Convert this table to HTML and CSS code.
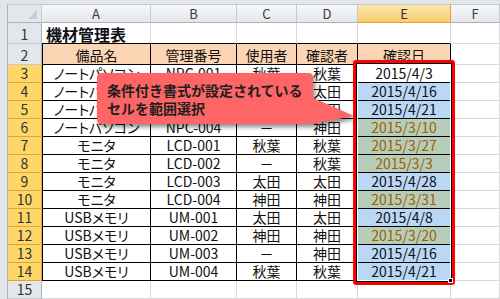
FILE: index.html
```html
<!DOCTYPE html>
<html lang="ja">
<head>
<meta charset="utf-8">
<link rel="stylesheet" href="styles.css">
</head>
<body>
<div class="frame">
  <div class="sheet">
    <div class="h corner"></div><div class="h">A</div><div class="h">B</div><div class="h">C</div><div class="h">D</div><div class="h hs">E</div><div class="h">F</div>

    <div class="rh">1</div><div class="c title top">機材管理表</div><div class="c top"></div><div class="c top"></div><div class="c top"></div><div class="c top"></div><div class="c"></div>

    <div class="rh">2</div><div class="c t l hd">備品名</div><div class="c t hd">管理番号</div><div class="c t hd">使用者</div><div class="c t hd">確認者</div><div class="c t hd">確認日</div><div class="c"></div>

    <div class="rh rs">3</div><div class="c t l">ノートパソコン</div><div class="c t">NPC-001</div><div class="c t">秋葉</div><div class="c t">秋葉</div><div class="c t e act">2015/4/3</div><div class="c"></div>
    <div class="rh rs">4</div><div class="c t l">ノートパソコン</div><div class="c t">NPC-002</div><div class="c t">太田</div><div class="c t">太田</div><div class="c t e blue">2015/4/16</div><div class="c"></div>
    <div class="rh rs">5</div><div class="c t l">ノートパソコン</div><div class="c t">NPC-003</div><div class="c t">神田</div><div class="c t">太田</div><div class="c t e blue">2015/4/21</div><div class="c"></div>
    <div class="rh rs">6</div><div class="c t l">ノートパソコン</div><div class="c t">NPC-004</div><div class="c t">－</div><div class="c t">神田</div><div class="c t e green">2015/3/10</div><div class="c"></div>
    <div class="rh rs">7</div><div class="c t l">モニタ</div><div class="c t">LCD-001</div><div class="c t">秋葉</div><div class="c t">秋葉</div><div class="c t e green">2015/3/27</div><div class="c"></div>
    <div class="rh rs">8</div><div class="c t l">モニタ</div><div class="c t">LCD-002</div><div class="c t">－</div><div class="c t">秋葉</div><div class="c t e green">2015/3/3</div><div class="c"></div>
    <div class="rh rs">9</div><div class="c t l">モニタ</div><div class="c t">LCD-003</div><div class="c t">太田</div><div class="c t">太田</div><div class="c t e blue">2015/4/28</div><div class="c"></div>
    <div class="rh rs">10</div><div class="c t l">モニタ</div><div class="c t">LCD-004</div><div class="c t">神田</div><div class="c t">神田</div><div class="c t e green">2015/3/31</div><div class="c"></div>
    <div class="rh rs">11</div><div class="c t l">USBメモリ</div><div class="c t">UM-001</div><div class="c t">太田</div><div class="c t">太田</div><div class="c t e blue">2015/4/8</div><div class="c"></div>
    <div class="rh rs">12</div><div class="c t l">USBメモリ</div><div class="c t">UM-002</div><div class="c t">神田</div><div class="c t">神田</div><div class="c t e green">2015/3/20</div><div class="c"></div>
    <div class="rh rs">13</div><div class="c t l">USBメモリ</div><div class="c t">UM-003</div><div class="c t">－</div><div class="c t">神田</div><div class="c t e blue">2015/4/16</div><div class="c"></div>
    <div class="rh rs">14</div><div class="c t l">USBメモリ</div><div class="c t">UM-004</div><div class="c t">秋葉</div><div class="c t">秋葉</div><div class="c t e blue">2015/4/21</div><div class="c"></div>

    <div class="rh">15</div><div class="c"></div><div class="c"></div><div class="c"></div><div class="c"></div><div class="c"></div><div class="c"></div>
  </div>

  <div class="selection"><span class="handle"></span></div>

  <svg class="callout-shape" width="500" height="299" viewBox="0 0 500 299" aria-hidden="true">
    <path d="M102 73 H308 Q313 73 313 78 V98 L354 116 L313 124 H102 Q97 124 97 119 V78 Q97 73 102 73 Z" fill="#fe6566"/>
  </svg>
  <div class="callout-text">条件付き書式が設定されている<br>セルを範囲選択</div>
</div>
</body>
</html>
```

FILE: styles.css
```css
* { box-sizing: border-box; }

html, body {
  margin: 0;
  padding: 0;
  width: 500px;
  height: 299px;
  overflow: hidden;
  background: #e2e5ea;
  font-family: "Noto Sans CJK JP", "Noto Sans", sans-serif;
}

.frame {
  position: relative;
  width: 500px;
  height: 299px;
  padding: 4px 0 0 7px;
}

.sheet {
  display: grid;
  grid-template-columns: 34px 109px 86px 60px 61px 93px 1fr;
  grid-template-rows: 18px 21px 21px repeat(13, 18px);
  border-top: 1px solid #c3c8cf;
  border-left: 1px solid #aab1bb;
  background: #fff;
  height: 295px;
}

/* column headers */
.h {
  background: linear-gradient(#f7f8fa, #e3e6ea);
  border-right: 1px solid #c6cbd2;
  border-bottom: 1px solid #a9b2bd;
  color: #3c3c3c;
  font-size: 13px;
  line-height: 17px;
  text-align: center;
}
.corner {
  position: relative;
  background: #e4e7eb;
}
.corner::after {
  content: "";
  position: absolute;
  right: 4px;
  bottom: 3px;
  border-left: 9px solid transparent;
  border-bottom: 9px solid #c9cdd3;
}
.hs {
  background: linear-gradient(#fde7b0, #f7cc6d);
  border-right-color: #e3a23d;
  border-bottom-color: #e3a23d;
  color: #333;
}

/* row headers */
.rh {
  background: #e3e6eb;
  border-right: 1px solid #a9b2bd;
  border-bottom: 1px solid #c6cbd2;
  color: #333;
  font-size: 14px;
  line-height: 17px;
  display: flex;
  align-items: flex-end;
  justify-content: center;
}
.rs {
  background: #fed768;
  border-right-color: #e3a23d;
  border-bottom-color: #e3a23d;
}

/* cells */
.c {
  border-right: 1px solid #d9d9d9;
  border-bottom: 1px solid #d9d9d9;
  font-size: 14px;
  line-height: 17px;
  color: #111;
  display: flex;
  align-items: flex-end;
  justify-content: center;
  white-space: nowrap;
  font-feature-settings: "palt";
}
.top { border-bottom-color: #000; }
.t {
  border-right-color: #000;
  border-bottom-color: #000;
}
.l { border-left: 1px solid #000; }
.title {
  justify-content: flex-start;
  padding-left: 4px;
  font-size: 16px;
  line-height: 18px;
  font-weight: bold;
}
.hd { background: #fcd5b4; }

.e { border-right-color: #1a1a1a; }
.act { background: #fff; }
.blue { background: #bad7f6; }
.green { background: #b7ccb9; color: #9c6100; }

/* selection highlight */
.selection {
  position: absolute;
  left: 353px;
  top: 60px;
  width: 102px;
  height: 225px;
  border: 3px solid #ff0000;
  border-radius: 3px;
  box-shadow: inset 0 0 0 1px #000, inset 0 0 0 2px #fff;
}
.handle {
  position: absolute;
  right: -1px;
  bottom: -1px;
  width: 5px;
  height: 5px;
  background: #000;
  border: 1px solid #fff;
}

/* callout */
.callout-shape {
  position: absolute;
  left: 0;
  top: 0;
  filter: drop-shadow(2px 3px 2px rgba(0, 0, 0, 0.45));
}
.callout-text {
  position: absolute;
  left: 107px;
  top: 81px;
  font-size: 14px;
  line-height: 18px;
  font-weight: bold;
  color: #1e1e1e;
  white-space: nowrap;
}
```
